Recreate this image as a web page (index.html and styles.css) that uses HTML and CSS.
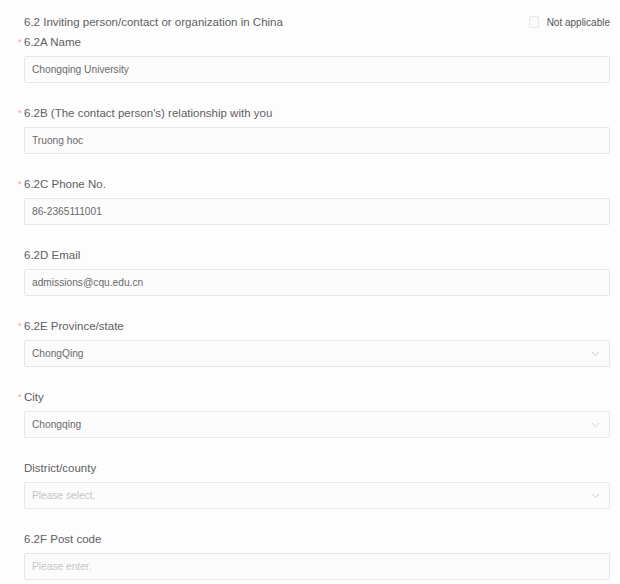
FILE: index.html
```html
<!DOCTYPE html>
<html lang="en">
<head>
<meta charset="utf-8">
<title>6.2 Inviting person</title>
<link rel="stylesheet" href="styles.css">
</head>
<body>
<div class="form">
  <div class="head">
    <span class="title">6.2 Inviting person/contact or organization in China</span>
    <label class="na"><span class="box"></span><span>Not applicable</span></label>
  </div>

  <div class="field">
    <div class="label"><span class="req">*</span>6.2A Name</div>
    <div class="input"><span class="val">Chongqing University</span></div>
  </div>

  <div class="field">
    <div class="label"><span class="req">*</span>6.2B (The contact person's) relationship with you</div>
    <div class="input"><span class="val">Truong hoc</span></div>
  </div>

  <div class="field">
    <div class="label"><span class="req">*</span>6.2C Phone No.</div>
    <div class="input"><span class="val">86-2365111001</span></div>
  </div>

  <div class="field">
    <div class="label">6.2D Email</div>
    <div class="input"><span class="val">admissions@cqu.edu.cn</span></div>
  </div>

  <div class="field">
    <div class="label"><span class="req">*</span>6.2E Province/state</div>
    <div class="input select"><span class="val">ChongQing</span>
      <svg class="chev" width="9" height="6" viewBox="0 0 9 6"><path d="M1 1l3.5 3.5L8 1" fill="none" stroke="#cfcfcf" stroke-width="1"/></svg>
    </div>
  </div>

  <div class="field">
    <div class="label"><span class="req">*</span>City</div>
    <div class="input select"><span class="val">Chongqing</span>
      <svg class="chev" width="9" height="6" viewBox="0 0 9 6"><path d="M1 1l3.5 3.5L8 1" fill="none" stroke="#cfcfcf" stroke-width="1"/></svg>
    </div>
  </div>

  <div class="field">
    <div class="label">District/county</div>
    <div class="input select"><span class="ph">Please select.</span>
      <svg class="chev" width="9" height="6" viewBox="0 0 9 6"><path d="M1 1l3.5 3.5L8 1" fill="none" stroke="#cfcfcf" stroke-width="1"/></svg>
    </div>
  </div>

  <div class="field">
    <div class="label">6.2F Post code</div>
    <div class="input"><span class="ph">Please enter.</span></div>
  </div>
</div>
</body>
</html>
```

FILE: styles.css
```css
* { box-sizing: border-box; }
html, body { margin: 0; padding: 0; background: #fdfdfd; }
body {
  font-family: "Liberation Sans", Arial, sans-serif;
  color: #606060;
}
.form {
  padding: 14px 10px 0 24px;
}
.head {
  display: flex;
  justify-content: space-between;
  align-items: center;
  height: 16px;
}
.title {
  font-size: 11.5px;
  line-height: 16px;
  color: #606060;
}
.na {
  display: flex;
  align-items: center;
  gap: 8px;
  font-size: 10px;
  color: #555;
}
.box {
  width: 10px;
  height: 12px;
  border: 1px solid #e8e8e8;
  background: #fafafa;
  border-radius: 1px;
}
.field {
  margin-top: 4px;
  margin-bottom: 22px;
}
.field + .field { margin-top: 0; }
.label {
  font-size: 11.5px;
  line-height: 16px;
  color: #606060;
  margin-bottom: 6px;
}
.req {
  color: #f3a0a0;
  font-size: 9px;
  margin-left: -6px;
  display: inline-block;
  width: 6px;
  vertical-align: 1px;
}
.input {
  height: 27px;
  border: 1px solid #e6e6e6;
  border-radius: 2px;
  background: #fcfcfc;
  display: flex;
  align-items: center;
  justify-content: space-between;
  padding: 0 9px 0 7px;
  font-size: 10.2px;
}
.val { color: #6a6a6a; }
.ph { color: #c4c4c4; }
.chev { display: block; }
```
